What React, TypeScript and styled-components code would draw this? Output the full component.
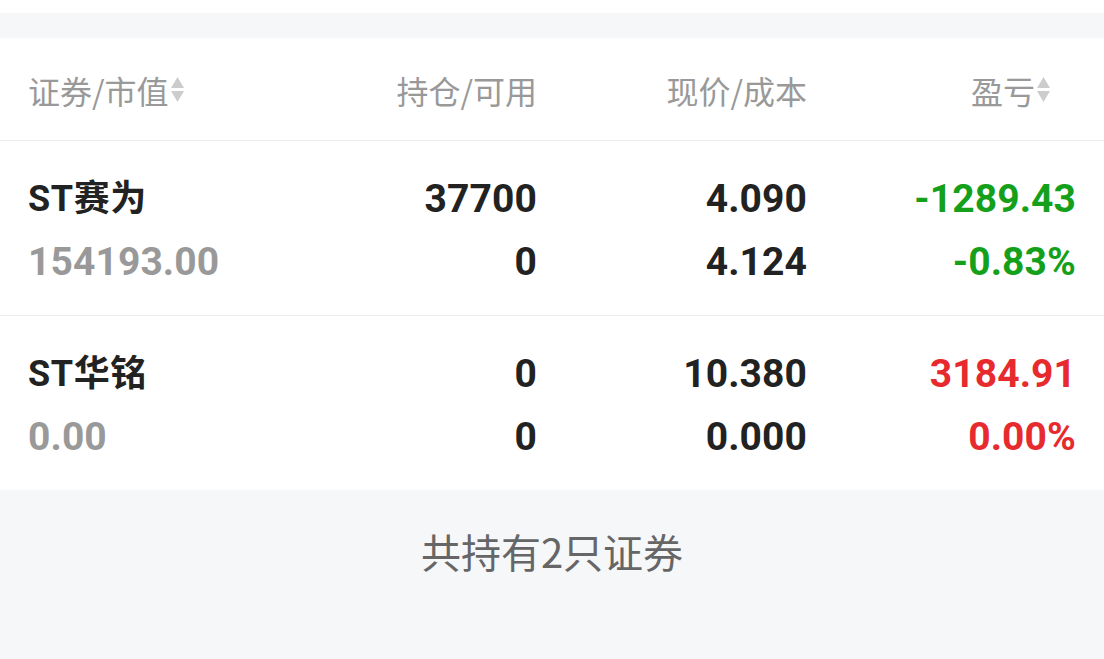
import React from 'react';
import styled, { createGlobalStyle } from 'styled-components';

const GlobalStyle = createGlobalStyle`
  html, body {
    margin: 0;
    padding: 0;
    background: #f6f7f9;
    font-family: Roboto, "Noto Sans CJK SC", sans-serif;
  }
`;

interface Position {
  name: string;
  marketValue: string;
  holding: string;
  available: string;
  price: string;
  cost: string;
  profit: string;
  profitRate: string;
}

const positions: Position[] = [
  {
    name: 'ST赛为',
    marketValue: '154193.00',
    holding: '37700',
    available: '0',
    price: '4.090',
    cost: '4.124',
    profit: '-1289.43',
    profitRate: '-0.83%',
  },
  {
    name: 'ST华铭',
    marketValue: '0.00',
    holding: '0',
    available: '0',
    price: '10.380',
    cost: '0.000',
    profit: '3184.91',
    profitRate: '0.00%',
  },
];

const Page = styled.div`
  width: 1104px;
  height: 659px;
  background: #f6f7f9;
  overflow: hidden;
  display: flex;
  flex-direction: column;
`;

const TopStrip = styled.div`
  height: 13px;
  background: #ffffff;
`;

const TopGap = styled.div`
  height: 25px;
`;

const Table = styled.div`
  background: #ffffff;
`;

const Grid = styled.div`
  display: grid;
  grid-template-columns: 272px 237px 270px 1fr;
  padding: 0 28px;
`;

const HeaderRow = styled(Grid)`
  height: 103px;
  align-items: center;
  padding-top: 1px;
  box-sizing: border-box;
  border-bottom: 1px solid #ebebeb;
`;

const HeaderCell = styled.div<{ $align?: 'left' | 'right'; $padRight?: number }>`
  display: flex;
  align-items: center;
  justify-content: ${p => (p.$align === 'right' ? 'flex-end' : 'flex-start')};
  padding-right: ${p => p.$padRight ?? 0}px;
  font-size: 32px;
  color: #999999;
  font-family: "Noto Sans CJK SC", sans-serif;
`;

const SortIcon = styled.svg`
  width: 15px;
  height: 28px;
  margin-left: 1px;
`;

const DataRow = styled(Grid)<{ $last?: boolean }>`
  padding-top: 27px;
  padding-bottom: 21px;
  border-bottom: ${p => (p.$last ? 'none' : '1px solid #ebebeb')};
`;

const Cell = styled.div<{ $align?: 'left' | 'right' }>`
  display: flex;
  flex-direction: column;
  align-items: ${p => (p.$align === 'right' ? 'flex-end' : 'flex-start')};
`;

const Line = styled.div<{ $color: string; $name?: boolean }>`
  height: 63px;
  line-height: 63px;
  font-size: ${p => (p.$name ? 36 : 39)}px;
  font-weight: 700;
  color: ${p => p.$color};
  white-space: nowrap;
  letter-spacing: ${p => (p.$name ? 0.6 : 0.1)}px;
`;

const Footer = styled.div`
  padding-top: 36px;
  text-align: center;
  font-size: 40px;
  line-height: 50px;
  color: #666666;
  font-family: "Noto Sans CJK SC", sans-serif;
`;

const Sort = () => (
  <SortIcon viewBox="0 0 15 28">
    <polygon points="7.5,1 14,12 1,12" fill="#cccccc" />
    <polygon points="1,15 14,15 7.5,26" fill="#cccccc" />
  </SortIcon>
);

const profitColor = (v: string) => (v.startsWith('-') ? '#14a01a' : '#e62a2d');

export default function App() {
  return (
    <Page>
      <GlobalStyle />
      <TopStrip />
      <TopGap />
      <Table>
        <HeaderRow>
          <HeaderCell>
            证券/市值
            <Sort />
          </HeaderCell>
          <HeaderCell $align="right">持仓/可用</HeaderCell>
          <HeaderCell $align="right">现价/成本</HeaderCell>
          <HeaderCell $align="right" $padRight={25}>
            盈亏
            <Sort />
          </HeaderCell>
        </HeaderRow>
        {positions.map((p, i) => (
          <DataRow key={p.name} $last={i === positions.length - 1}>
            <Cell>
              <Line $color="#222222" $name>{p.name}</Line>
              <Line $color="#999999">{p.marketValue}</Line>
            </Cell>
            <Cell $align="right">
              <Line $color="#222222">{p.holding}</Line>
              <Line $color="#222222">{p.available}</Line>
            </Cell>
            <Cell $align="right">
              <Line $color="#222222">{p.price}</Line>
              <Line $color="#222222">{p.cost}</Line>
            </Cell>
            <Cell $align="right">
              <Line $color={profitColor(p.profit)}>{p.profit}</Line>
              <Line $color={profitColor(p.profit)}>{p.profitRate}</Line>
            </Cell>
          </DataRow>
        ))}
      </Table>
      <Footer>共持有2只证券</Footer>
    </Page>
  );
}
